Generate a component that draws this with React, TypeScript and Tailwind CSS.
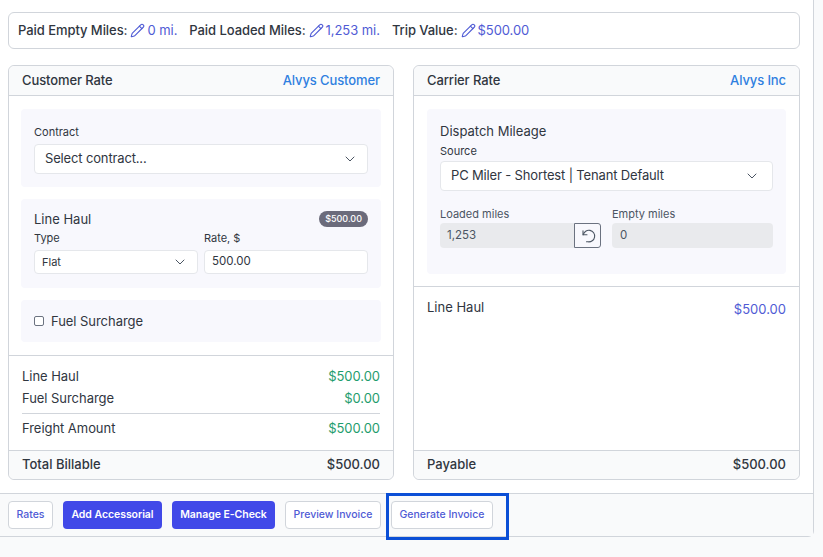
import { ChevronDown, Pencil } from "lucide-react";

const FONT = "font-['Inter','Liberation_Sans',sans-serif]";

const EditValue = ({ label, value }: { label: string; value: string }) => (
  <div className="flex items-center tracking-[-0.06px]">
    <span className="font-medium text-[#30363f]">{label}</span>
    <Pencil className="ml-[3px] mr-[2px] h-[15px] w-[15px] text-[#4f5bd5]" strokeWidth={1.75} />
    <span className="text-[#4f5bd5]">{value}</span>
  </div>
);

const CardHeader = ({ title, party }: { title: string; party: string }) => (
  <div className="flex h-[30px] items-center justify-between rounded-t-[6px] border-b border-[#d1d5db] bg-[#f9fafb] px-[13px] text-[13px] font-medium tracking-[-0.1px]">
    <span className="text-[#30363f]">{title}</span>
    <span className="text-[#2f7fe0]">{party}</span>
  </div>
);

const SelectBox = ({ value, className }: { value: string; className: string }) => (
  <div className={`flex items-center justify-between rounded-[4px] border border-[#e5e7eb] bg-white ${className}`}>
    <span className="text-[#30363f]">{value}</span>
    <ChevronDown className="h-[16px] w-[16px] text-[#4b5563]" strokeWidth={1.5} />
  </div>
);

const Row = ({ label, amount }: { label: string; amount: string }) => (
  <div className="flex h-[22px] items-center justify-between text-[13px] tracking-[-0.05px]">
    <span className="text-[#30363f]">{label}</span>
    <span className="text-[#1f9d6e]">{amount}</span>
  </div>
);

const CardFooter = ({ label, amount }: { label: string; amount: string }) => (
  <div className="flex h-[29px] items-center justify-between rounded-b-[6px] border-t border-[#d1d5db] bg-[#f9fafb] px-[13px] text-[13px] font-medium text-[#30363f]">
    <span>{label}</span>
    <span>{amount}</span>
  </div>
);

export default function App() {
  return (
    <div className={`${FONT} h-[557px] w-[823px] overflow-hidden bg-[#f9fafb]`}>
      <div className="flex h-[537px] w-[814px] flex-col rounded-br-[6px] border-b border-r border-[#d1d5db] bg-white">
        <div className="flex-1 pl-[8px] pr-[13px] pt-[12px]">
          {/* Mileage summary */}
          <div className="flex h-[37px] items-center gap-[12px] rounded-[6px] border border-[#d1d5db] bg-white px-[9px] text-[13px]">
            <EditValue label="Paid Empty Miles:" value="0 mi." />
            <EditValue label="Paid Loaded Miles:" value="1,253 mi." />
            <EditValue label="Trip Value:" value="$500.00" />
          </div>

          <div className="mt-[16px] flex gap-[19px]">
            {/* Customer Rate */}
            <div className="flex h-[415px] w-[386px] flex-col rounded-[6px] border border-[#d1d5db]">
              <CardHeader title="Customer Rate" party="Alvys Customer" />
              <div className="flex flex-col gap-[12px] px-[12px] pt-[13px]">
                <div className="h-[78px] rounded-[4px] bg-[#f8f8fd] px-[13px] pt-[17px]">
                  <div className="text-[11px] leading-[13px] text-[#30363f]">Contract</div>
                  <SelectBox value="Select contract..." className="mt-[5px] h-[30px] pl-[10px] pr-[9px] text-[13px] tracking-[-0.15px]" />
                </div>
                <div className="h-[89px] rounded-[4px] bg-[#f8f8fd] px-[13px] pt-[12px]">
                  <div className="flex items-center justify-between">
                    <span className="text-[13px] leading-[16px] text-[#30363f]">Line Haul</span>
                    <span className="flex h-[16px] items-center rounded-full bg-[#6b6b7b] px-[6px] text-[9px] font-medium text-white">$500.00</span>
                  </div>
                  <div className="mt-[5px] flex gap-[6px] text-[11px] text-[#30363f]">
                    <div className="w-[164px]">
                      <div className="leading-[13px]">Type</div>
                      <SelectBox value="Flat" className="mt-[5px] h-[24px] pl-[7px] pr-[9px] text-[11px]" />
                    </div>
                    <div className="flex-1">
                      <div className="leading-[13px]">Rate, $</div>
                      <div className="mt-[5px] flex h-[24px] items-center rounded-[4px] border border-[#e5e7eb] bg-white pl-[7px] text-[11.5px]">500.00</div>
                    </div>
                  </div>
                </div>
                <div className="flex h-[42px] items-center gap-[7px] rounded-[4px] bg-[#f8f8fd] px-[13px]">
                  <span className="h-[10px] w-[10px] rounded-[2px] border border-[#6b7280] bg-white" />
                  <span className="mt-[1px] text-[13px] tracking-[-0.05px] text-[#30363f]">Fuel Surcharge</span>
                </div>
              </div>
              <div className="mt-[13px] flex-1 border-t border-[#d1d5db] px-[13px] pt-[10px]">
                <Row label="Line Haul" amount="$500.00" />
                <Row label="Fuel Surcharge" amount="$0.00" />
                <div className="mt-[3px] border-t border-[#d1d5db] pt-[4px]">
                  <Row label="Freight Amount" amount="$500.00" />
                </div>
              </div>
              <CardFooter label="Total Billable" amount="$500.00" />
            </div>

            {/* Carrier Rate */}
            <div className="flex h-[415px] w-[387px] flex-col rounded-[6px] border border-[#d1d5db]">
              <CardHeader title="Carrier Rate" party="Alvys Inc" />
              <div className="px-[13px] pt-[13px]">
                <div className="h-[165px] rounded-[4px] bg-[#f8f8fd] px-[13px] pt-[14px]">
                  <div className="text-[13px] leading-[17px] text-[#30363f]">Dispatch Mileage</div>
                  <div className="mt-[5px] text-[11px] leading-[13px] text-[#30363f]">Source</div>
                  <SelectBox value="PC Miler - Shortest | Tenant Default" className="mt-[3px] h-[30px] pl-[10px] pr-[12px] text-[13px] tracking-[-0.15px]" />
                  <div className="mt-[17px] flex gap-[11px]">
                    <div className="w-[161px]">
                      <div className="text-[11px] leading-[13px] text-[#4b5563]">Loaded miles</div>
                      <div className="mt-[2px] flex h-[25px]">
                        <div className="flex flex-1 items-center rounded-l-[4px] bg-[#e9eaed] pl-[7px] text-[11.5px] text-[#4b5563]">1,253</div>
                        <div className="flex w-[27px] items-center justify-center rounded-r-[3px] border border-[#6b7280]">
                          <svg viewBox="0 0 16 16" className="h-[16px] w-[16px] text-[#4b5563]" fill="none" stroke="currentColor" strokeWidth="1.1" strokeLinecap="round" strokeLinejoin="round">
                            <path d="M3 2.8v4h4" />
                            <path d="M3.2 6.8A5.8 5.8 0 1 1 8 13.8H6.5" />
                          </svg>
                        </div>
                      </div>
                    </div>
                    <div className="flex-1">
                      <div className="text-[11px] leading-[13px] text-[#4b5563]">Empty miles</div>
                      <div className="mt-[2px] flex h-[25px] items-center rounded-[4px] bg-[#e9eaed] pl-[8px] text-[11.5px] text-[#4b5563]">0</div>
                    </div>
                  </div>
                </div>
              </div>
              <div className="mt-[12px] flex flex-1 items-start justify-between border-t border-[#d1d5db] px-[13px] pt-[11px] text-[13px]">
                <span className="text-[#30363f]">Line Haul</span>
                <span className="mt-[2px] text-[#4f5bd5]">$500.00</span>
              </div>
              <CardFooter label="Payable" amount="$500.00" />
            </div>
          </div>
        </div>

        {/* Action bar */}
        <div className="flex h-[43px] items-center gap-[10px] border-t border-[#d1d5db] bg-[#f9fafb] pl-[8px] text-[10.5px] font-medium">
          <button className="h-[28px] w-[45px] rounded-[4px] border border-[#d1d5db] bg-white text-[#4f5bd5]">Rates</button>
          <button className="h-[28px] w-[99px] rounded-[4px] bg-[#4149e8] font-semibold tracking-[-0.05px] text-white">Add Accessorial</button>
          <button className="h-[28px] w-[103px] rounded-[4px] bg-[#4149e8] font-semibold tracking-[-0.05px] text-white">Manage E-Check</button>
          <button className="h-[28px] w-[96px] rounded-[4px] border border-[#d1d5db] bg-white text-[#4f5bd5]">Preview Invoice</button>
          <div className="relative">
            <button className="h-[28px] w-[102px] rounded-[4px] border border-[#d1d5db] bg-white text-[#4f5bd5]">Generate Invoice</button>
            <div className="absolute -bottom-[11px] -left-[5px] -right-[16px] -top-[8px] border-[3px] border-[#0b4fd6]" />
          </div>
        </div>
      </div>
    </div>
  );
}
